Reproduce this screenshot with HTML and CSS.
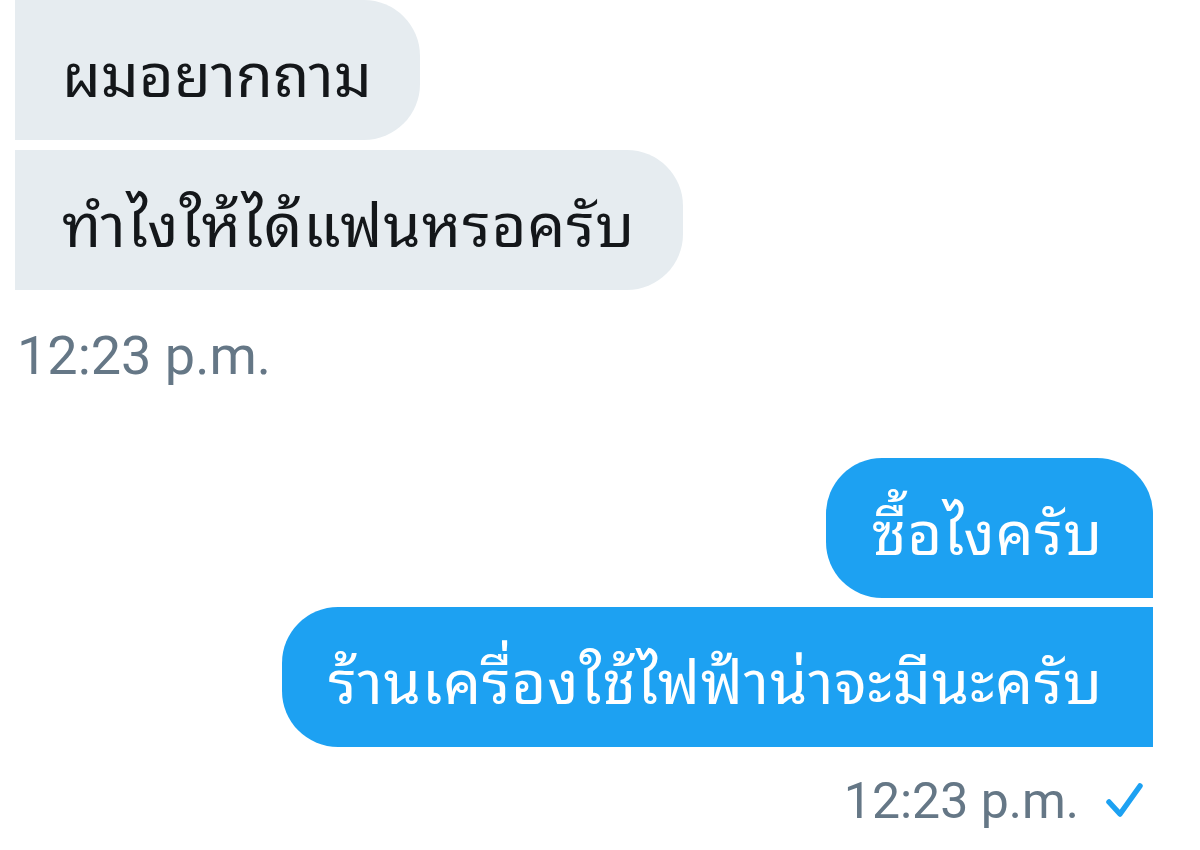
FILE: index.html
```html
<!DOCTYPE html>
<html lang="th">
<head>
<meta charset="utf-8">
<title>Chat</title>
<link rel="stylesheet" href="styles.css">
</head>
<body>
<div class="chat">
  <div class="group group-in">
    <div class="bubble bubble-in bubble-first">ผมอยากถาม</div>
    <div class="bubble bubble-in bubble-last bubble-wide">ทำไงให้ได้แฟนหรอครับ</div>
    <div class="meta meta-in">12:23 p.m.</div>
  </div>
  <div class="group group-out">
    <div class="bubble bubble-out bubble-first-out bubble-wider">ซื้อไงครับ</div>
    <div class="bubble bubble-out bubble-last-out bubble-wide">ร้านเครื่องใช้ไฟฟ้าน่าจะมีนะครับ</div>
    <div class="meta meta-out">
      <span>12:23 p.m.</span>
      <svg class="check" width="40" height="40" viewBox="0 0 40 40" aria-hidden="true">
        <path d="M6 21 L17 33 L37 5" fill="none" stroke="#1da1f2" stroke-width="5.5" stroke-linecap="round" stroke-linejoin="round"/>
      </svg>
    </div>
  </div>
</div>
</body>
</html>
```

FILE: styles.css
```css
html, body {
  margin: 0;
  padding: 0;
  background: #ffffff;
}

body {
  width: 1200px;
  height: 850px;
  overflow: hidden;
  font-family: "Noto Sans Thai Looped", "Waree", "Loma", "Garuda", "Tlwg Typist", "Noto Sans Thai", "Noto Sans", "Roboto", sans-serif;
}

.chat {
  display: flex;
  flex-direction: column;
  padding: 0 47px 0 15px;
}

.group {
  display: flex;
  flex-direction: column;
  gap: 10px;
}

.group-in {
  align-items: flex-start;
}

.group-out {
  align-items: flex-end;
  margin-top: 70px;
  gap: 9px;
}

.bubble {
  box-sizing: border-box;
  height: 140px;
  display: flex;
  align-items: center;
  font-size: 60px;
  white-space: nowrap;
}

.bubble-wide {
  letter-spacing: 0.9px;
}

.bubble-wider {
  letter-spacing: 0.8px;
}

.bubble-in {
  background: #e6ecf0;
  color: #14171a;
  padding: 0 48px 0 47px;
}

.bubble-first {
  border-radius: 0 56px 56px 0;
}

.bubble-last {
  border-radius: 0 56px 56px 0;
}

.bubble-out {
  background: #1da1f2;
  color: #ffffff;
  padding: 0 50px 0 46px;
}

.bubble-first-out {
  border-radius: 56px 56px 0 56px;
}

.bubble-last-out {
  border-radius: 56px 0 0 56px;
}

.meta {
  font-family: "Roboto", "Liberation Sans", sans-serif;
  color: #657786;
  display: flex;
  align-items: center;
}

.meta-in {
  font-size: 54px;
  line-height: 64px;
  margin-top: 24px;
  padding-left: 2px;
}

.meta-out {
  font-size: 50px;
  line-height: 60px;
  margin-top: 15px;
  gap: 24px;
  margin-right: 10px;
}

.check {
  display: block;
}
```
